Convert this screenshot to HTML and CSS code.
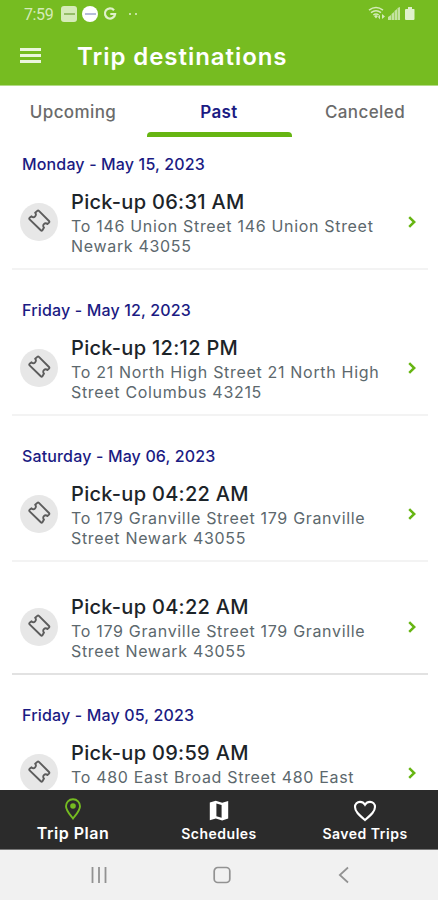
FILE: index.html
```
<!DOCTYPE html>
<html lang="en">

<head>
    <meta charset="UTF-8">
    <meta name="viewport" content="width=device-width, initial-scale=1.0">
    <title>Trip destinations</title>
    <link rel="stylesheet" href="styles.css">
</head>

<body>
    <!-- shared icons -->
    <svg class="defs" width="0" height="0">
        <symbol id="ticket" viewBox="0 0 24 24">
            <path d="M11.9 1.9 L22 12 Q22.7 12.8 22 13.6 L20.4 15 A2.3 2.3 0 0 0 17 18.6 L15.4 21.3 Q14.6 22 13.8 21.3 L2.6 10.4 Q1.9 9.6 2.6 8.8 L4.6 7.3 A2.3 2.3 0 0 0 8.2 3.8 L10.3 1.9 Q11.1 1.2 11.9 1.9 Z" fill="none" stroke="#5c5c5c" stroke-width="1.9" stroke-linejoin="round" />
        </symbol>
        <symbol id="chevron" viewBox="0 0 8 12">
            <path d="M1.2 1.2 L6.2 6 L1.2 10.8" fill="none" stroke="#66b512" stroke-width="2.5" />
        </symbol>
    </svg>

    <div class="app">
        <header class="header">
            <div class="status-bar">
                <span class="clock">7:59</span>
                <span class="app-badge square"><i></i></span>
                <span class="app-badge round"><i></i></span>
                <svg class="google" width="14" height="14" viewBox="0 0 14 14">
                    <path d="M11 3.2 A5.1 5.1 0 1 0 12.1 7 H7.3" fill="none" stroke="#e0f1cb" stroke-width="2.2" />
                </svg>
                <span class="dots"><i></i><i></i></span>
                <svg class="signals" width="48" height="16" viewBox="0 0 48 16">
                    <g fill="none" stroke="#d5ebb9" stroke-width="1.5">
                        <path d="M1 4.2 Q8 -1 15 4.2" />
                        <path d="M3 6.7 Q8 2.7 13 6.7" />
                        <path d="M5.3 9 Q8 6.8 10.7 9" />
                    </g>
                    <path d="M6 10 L8 9 L10 10 L8 12.5 Z M10 11 L12 8.5 V13.5 Z M14 8 L17 10.5 L14 13 Z" fill="#d5ebb9" />
                    <path d="M20 14 V11 L23 9 V14 Z M23.5 14 V8 L26 6 V14 Z M26.5 14 V5 L29 3 V14 Z M29.5 14 V2 L32 1 V14 Z" fill="#c4e3a0" />
                    <path d="M38 3 H40 V1 H44 V3 H46 Q46.5 3 46.5 4 V13 Q46.5 14 45.5 14 H38 Q37 14 37 13 V4 Q37 3 38 3 Z" fill="#e0f1cb" />
                </svg>
            </div>
            <div class="title-bar">
                <div class="menu"><i></i><i></i><i></i></div>
                <h1>Trip destinations</h1>
            </div>
        </header>

        <nav class="tabs">
            <div class="tab">Upcoming</div>
            <div class="tab active">Past</div>
            <div class="tab">Canceled</div>
        </nav>

        <main class="trips">
            <h2>Monday - May 15, 2023</h2>
            <div class="trip">
                <div class="trip-icon"><svg width="24" height="24"><use href="#ticket" /></svg></div>
                <div class="trip-info">
                    <h3>Pick-up 06:31 AM</h3>
                    <p>To 146 Union Street 146 Union Street<br>Newark 43055</p>
                </div>
                <svg class="chevron" width="8" height="12"><use href="#chevron" /></svg>
            </div>

            <h2>Friday - May 12, 2023</h2>
            <div class="trip">
                <div class="trip-icon"><svg width="24" height="24"><use href="#ticket" /></svg></div>
                <div class="trip-info">
                    <h3>Pick-up 12:12 PM</h3>
                    <p>To 21 North High Street 21 North High<br>Street Columbus 43215</p>
                </div>
                <svg class="chevron" width="8" height="12"><use href="#chevron" /></svg>
            </div>

            <h2>Saturday - May 06, 2023</h2>
            <div class="trip">
                <div class="trip-icon"><svg width="24" height="24"><use href="#ticket" /></svg></div>
                <div class="trip-info">
                    <h3>Pick-up 04:22 AM</h3>
                    <p>To 179 Granville Street 179 Granville<br>Street Newark 43055</p>
                </div>
                <svg class="chevron" width="8" height="12"><use href="#chevron" /></svg>
            </div>
            <div class="trip last">
                <div class="trip-icon"><svg width="24" height="24"><use href="#ticket" /></svg></div>
                <div class="trip-info">
                    <h3>Pick-up 04:22 AM</h3>
                    <p>To 179 Granville Street 179 Granville<br>Street Newark 43055</p>
                </div>
                <svg class="chevron" width="8" height="12"><use href="#chevron" /></svg>
            </div>

            <h2>Friday - May 05, 2023</h2>
            <div class="trip">
                <div class="trip-icon"><svg width="24" height="24"><use href="#ticket" /></svg></div>
                <div class="trip-info">
                    <h3>Pick-up 09:59 AM</h3>
                    <p>To 480 East Broad Street 480 East<br>&nbsp;</p>
                </div>
                <svg class="chevron" width="8" height="12"><use href="#chevron" /></svg>
            </div>
        </main>

        <nav class="bottom-nav">
            <div class="nav-item current">
                <svg width="18" height="22" viewBox="0 0 18 22">
                    <path d="M9 1.3 C4.8 1.3 2 4.4 2 8.2 C2 12.6 6 16.5 9 20.5 C12 16.5 16 12.6 16 8.2 C16 4.4 13.2 1.3 9 1.3 Z" fill="none" stroke="#75bc21" stroke-width="1.9" />
                    <circle cx="9" cy="8" r="2.8" fill="#75bc21" />
                </svg>
                <span>Trip Plan</span>
            </div>
            <div class="nav-item">
                <svg width="20" height="22" viewBox="0 0 20 22">
                    <path d="M0.8 2.5 L6.8 0.8 L13.2 2.8 L19.2 0.9 V18.5 L13.2 20.5 L6.8 18.5 L0.8 20.3 Z" fill="#fff" />
                    <path d="M7.4 3.5 L12.6 5 V17.8 L7.4 16.2 Z" fill="#2b2b2b" />
                </svg>
                <span>Schedules</span>
            </div>
            <div class="nav-item">
                <svg width="24" height="22" viewBox="0 0 24 22">
                    <path d="M12 20 C6 14.8 2 11.5 2 7.1 C2 4 4.3 1.9 7 1.9 C9 1.9 10.9 3 12 4.8 C13.1 3 15 1.9 17 1.9 C19.7 1.9 22 4 22 7.1 C22 11.5 18 14.8 12 20 Z" fill="none" stroke="#fff" stroke-width="2.1" />
                </svg>
                <span>Saved Trips</span>
            </div>
        </nav>

        <div class="system-nav">
            <svg width="16" height="16" viewBox="0 0 16 16">
                <path d="M1.5 0 V16 M8 0 V16 M14.5 0 V16" stroke="#929292" stroke-width="1.8" />
            </svg>
            <svg width="18" height="18" viewBox="0 0 18 18">
                <rect x="1.2" y="1.5" width="15.6" height="15" rx="3.6" fill="none" stroke="#929292" stroke-width="1.7" />
            </svg>
            <svg width="16" height="18" viewBox="0 0 16 18">
                <path d="M12 1.5 L3.8 9 L12 16.5" fill="none" stroke="#929292" stroke-width="1.7" />
            </svg>
        </div>
    </div>
</body>

</html>
```
FILE: styles.css
```
* {
    box-sizing: border-box;
}

body {
    margin: 0;
    background: #fff;
    font-family: 'Inter', 'Liberation Sans', sans-serif;
}

h1,
h2,
h3,
p {
    margin: 0;
    white-space: nowrap;
}

svg {
    display: block;
    flex-shrink: 0;
}

.defs {
    position: absolute;
}

.app {
    display: flex;
    flex-direction: column;
    height: 900px;
    overflow: hidden;
}

/* header */
.header {
    flex: 0 0 86px;
    background: #76bc21;
    border-bottom: 1px solid #b3da86;
    color: #fff;
}

.status-bar {
    display: flex;
    align-items: center;
    height: 28px;
    padding: 0 19px 0 24px;
}

.clock {
    width: 37px;
    font-family: 'Roboto', sans-serif;
    font-size: 16px;
    letter-spacing: -0.4px;
    color: #d5ebb9;
}

.app-badge {
    display: flex;
    align-items: center;
    justify-content: center;
    width: 16px;
    height: 16px;
    margin-right: 5px;
    background: #d5ebb9;
    border-radius: 3px;
}

.app-badge i {
    width: 11px;
    height: 2px;
    background: #94bd67;
}

.app-badge.round {
    background: #fff;
    border-radius: 50%;
}

.app-badge.round i {
    background: #b7bddc;
}

.dots {
    display: flex;
    gap: 4px;
    margin-left: 12px;
}

.dots i {
    width: 2px;
    height: 2px;
    background: #c4e3a0;
}

.signals {
    margin-left: auto;
    margin-right: 3px;
}

.title-bar {
    display: flex;
    align-items: center;
    height: 57px;
    padding-left: 20px;
}

.menu {
    display: flex;
    flex-direction: column;
    gap: 3px;
    width: 21px;
    margin-right: 36px;
    margin-top: -2px;
}

.menu i {
    height: 3px;
    background: #eaf6dc;
}

h1 {
    font-size: 24px;
    font-weight: 600;
    letter-spacing: 0.95px;
}

/* tabs */
.tabs {
    display: flex;
    flex: 0 0 51px;
}

.tab {
    flex: 1;
    height: 51px;
    line-height: 52px;
    text-align: center;
    font-size: 17px;
    font-weight: 500;
    letter-spacing: 0.4px;
    color: #6b6b6b;
}

.tab.active {
    position: relative;
    font-weight: 600;
    color: #1b1b83;
}

.tab.active::after {
    content: '';
    position: absolute;
    left: 1px;
    right: 0;
    bottom: 0;
    height: 5px;
    background: #66b512;
    border-radius: 4px 4px 0 0;
}

/* trip list */
.trips {
    flex: 1;
    min-height: 0;
    padding: 0 10px 0 12px;
    overflow: hidden;
}

h2 {
    padding: 30px 0 0 10px;
    line-height: 20px;
    font-size: 16px;
    font-weight: 500;
    letter-spacing: 0.15px;
    color: #1b1b83;
}

h2:first-child {
    padding-top: 17px;
}

.trip {
    display: flex;
    align-items: center;
    padding: 33px 12px 12px 8px;
    border-bottom: 2px solid #f3f3f3;
}

h2 + .trip {
    padding-top: 16px;
}

.trip.last {
    border-color: #e2e2e2;
}

.trip-icon {
    display: flex;
    align-items: center;
    justify-content: center;
    width: 38px;
    height: 38px;
    margin-right: 13px;
    margin-top: -3px;
    padding-bottom: 1px;
    background: #e7e7e7;
    border-radius: 50%;
}

h3 {
    line-height: 24px;
    font-size: 20px;
    font-weight: 500;
    letter-spacing: 0.3px;
    color: #1c2429;
}

.trip p {
    margin-top: 2px;
    line-height: 20px;
    font-size: 16px;
    letter-spacing: 0.68px;
    color: #5c686d;
}

.chevron {
    margin-top: -2px;
    margin-left: auto;
}

/* app navigation */
.bottom-nav {
    display: flex;
    flex: 0 0 60px;
    background: #2b2b2b;
    border-bottom: 1px solid #777;
}

.nav-item {
    display: flex;
    flex: 1;
    flex-direction: column;
    align-items: center;
    padding-top: 10px;
    font-size: 14px;
    font-weight: 600;
    line-height: 20px;
    letter-spacing: 0.5px;
    color: #fff;
}

.nav-item span {
    margin-top: 2px;
}

.nav-item.current {
    padding-top: 8px;
    font-size: 16px;
}

.nav-item.current span {
    margin-top: 3px;
}

/* phone buttons */
.system-nav {
    display: flex;
    flex: 0 0 50px;
    align-items: center;
    justify-content: space-between;
    padding: 0 86px 0 91px;
    background: #f1f1f1;
}
```
